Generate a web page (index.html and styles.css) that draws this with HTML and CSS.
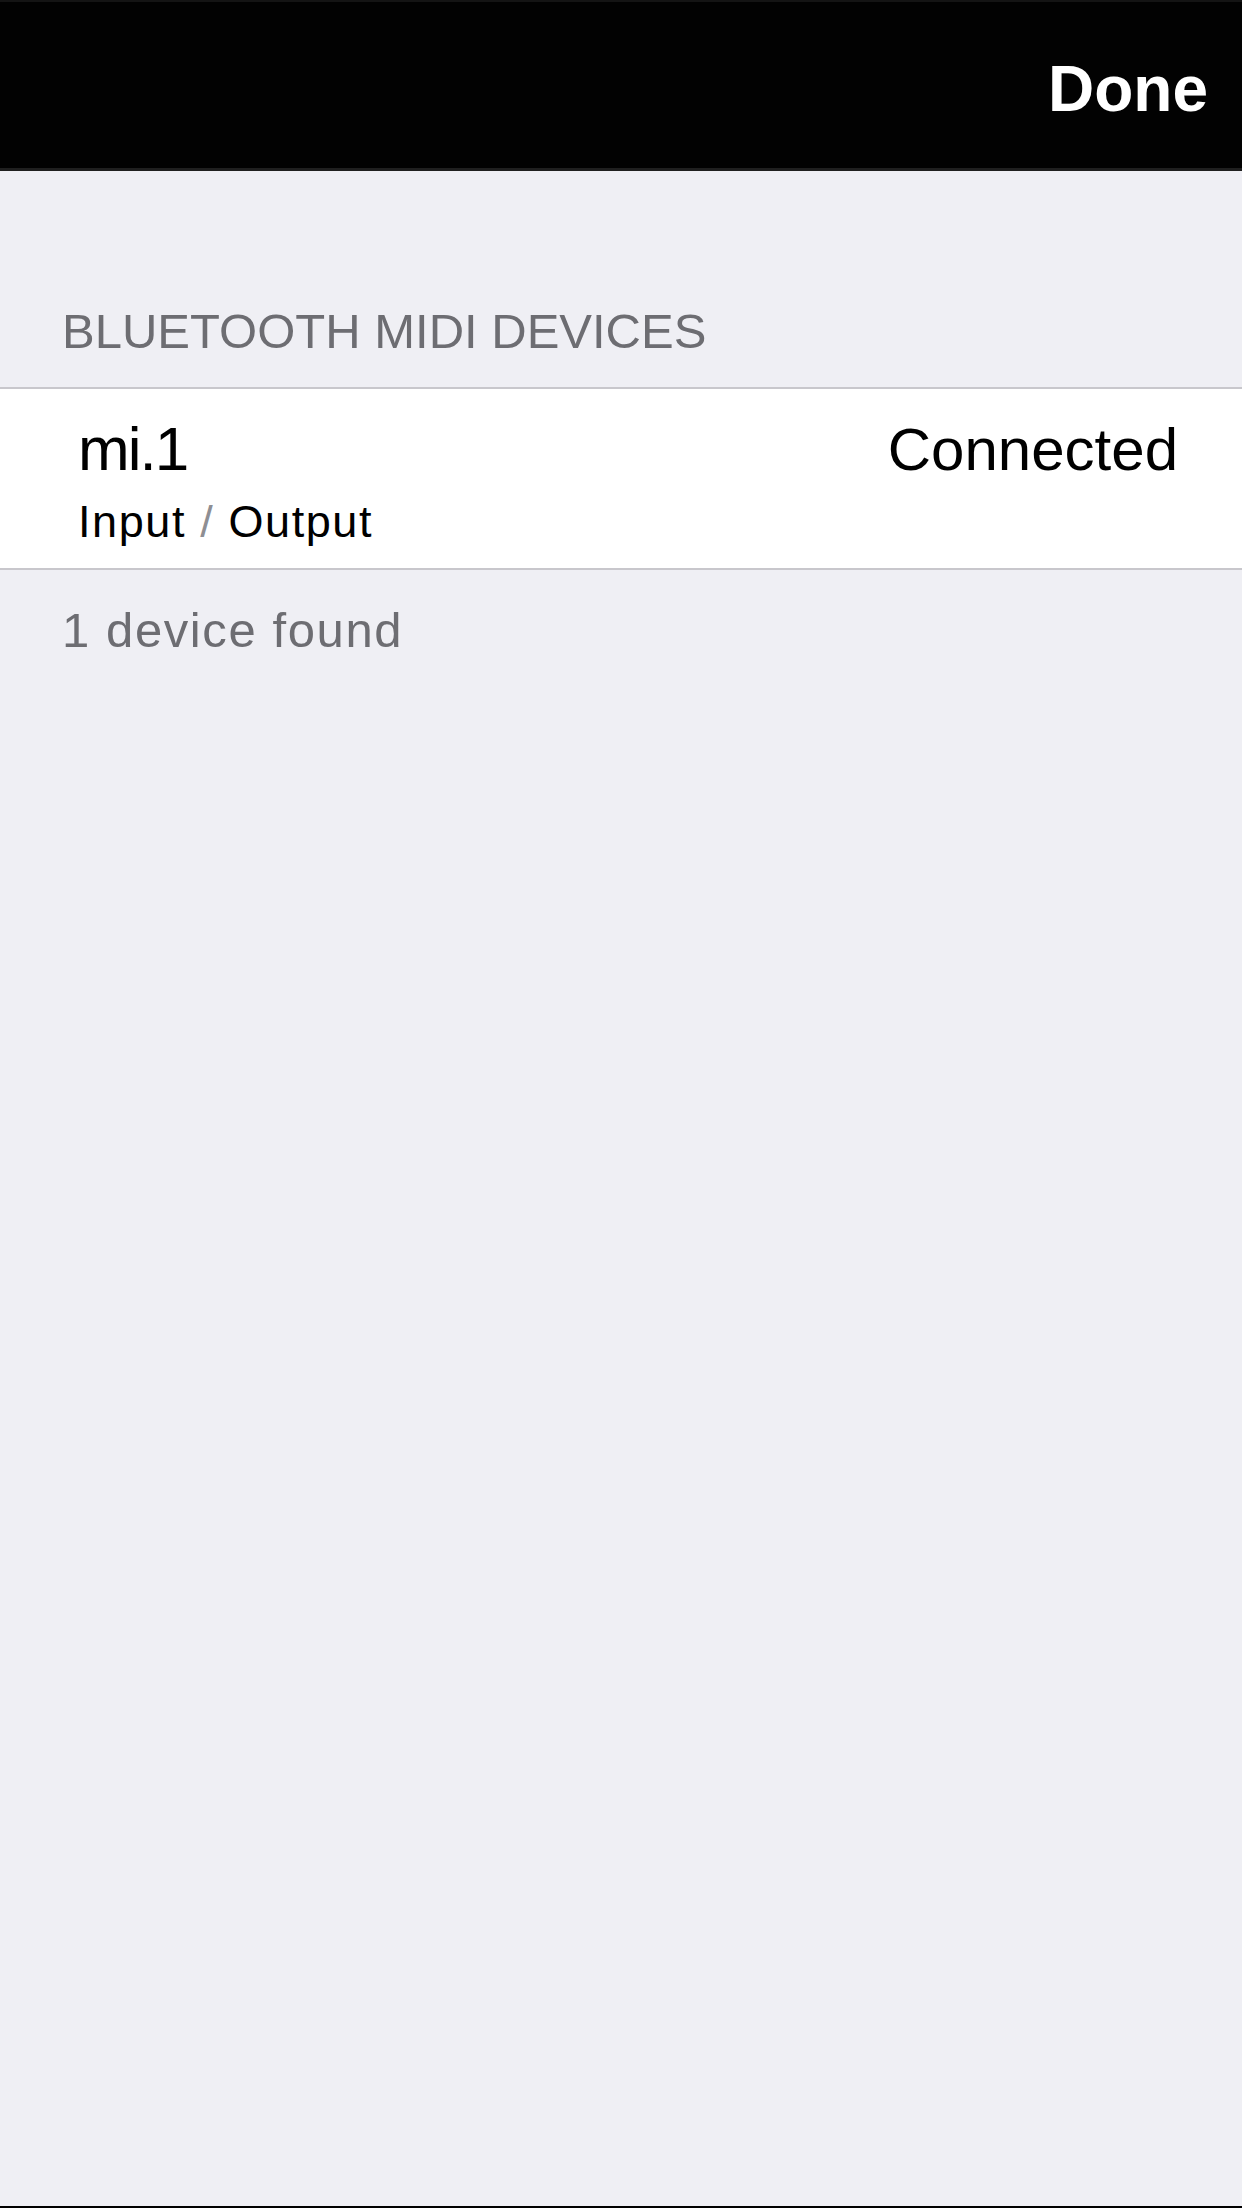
FILE: index.html
```html
<!DOCTYPE html>
<html lang="en">
<head>
<meta charset="utf-8">
<title>Bluetooth MIDI Devices</title>
<link rel="stylesheet" href="styles.css">
</head>
<body>
<div class="screen">
  <header class="navbar">
    <span class="done">Done</span>
  </header>
  <main class="content">
    <div class="section-header">BLUETOOTH MIDI DEVICES</div>
    <div class="list">
      <div class="row">
        <div class="row-text">
          <div class="device-name">mi.1</div>
          <div class="device-ports">Input <span class="slash">/</span> Output</div>
        </div>
        <div class="status">Connected</div>
      </div>
    </div>
    <div class="section-footer">1 device found</div>
  </main>
</div>
</body>
</html>
```
FILE: styles.css
```css
html, body {
  margin: 0;
  padding: 0;
}

body {
  font-family: "Liberation Sans", Arial, sans-serif;
  background: #efeff4;
}

.screen {
  width: 1242px;
  height: 2208px;
  box-sizing: border-box;
  display: flex;
  flex-direction: column;
  background: #efeff4;
  border-bottom: 2px solid #000;
}

.navbar {
  height: 171px;
  box-sizing: border-box;
  background: #020202;
  border-top: 2px solid #141414;
  border-bottom: 3px solid #1f1f1f;
  display: flex;
  justify-content: flex-end;
  align-items: flex-start;
  padding: 55px 34px 0 0;
}

.done {
  color: #fff;
  font-weight: 700;
  font-size: 64px;
  line-height: 64px;
}

.content {
  flex: 1;
}

.section-header {
  padding: 136px 62px 31px;
  font-size: 49px;
  line-height: 49px;
  color: #6d6d72;
}

.list {
  background: #fff;
  border-top: 2px solid #c8c7cc;
  border-bottom: 2px solid #c8c7cc;
}

.row {
  height: 179px;
  box-sizing: border-box;
  display: flex;
  justify-content: space-between;
  align-items: baseline;
  padding: 29px 64px 0 78px;
}

.row-text {
  display: flex;
  flex-direction: column;
  gap: 19px;
}

.device-name {
  font-size: 62px;
  line-height: 62px;
  letter-spacing: -2px;
  color: #000;
}

.device-ports {
  font-size: 45px;
  line-height: 45px;
  letter-spacing: 1.6px;
  color: #000;
}

.slash {
  color: #8e8e93;
}

.status {
  font-size: 60px;
  line-height: 60px;
  color: #000;
}

.section-footer {
  padding: 36px 62px 0;
  font-size: 49px;
  line-height: 49px;
  letter-spacing: 1.6px;
  color: #6d6d72;
}
```
